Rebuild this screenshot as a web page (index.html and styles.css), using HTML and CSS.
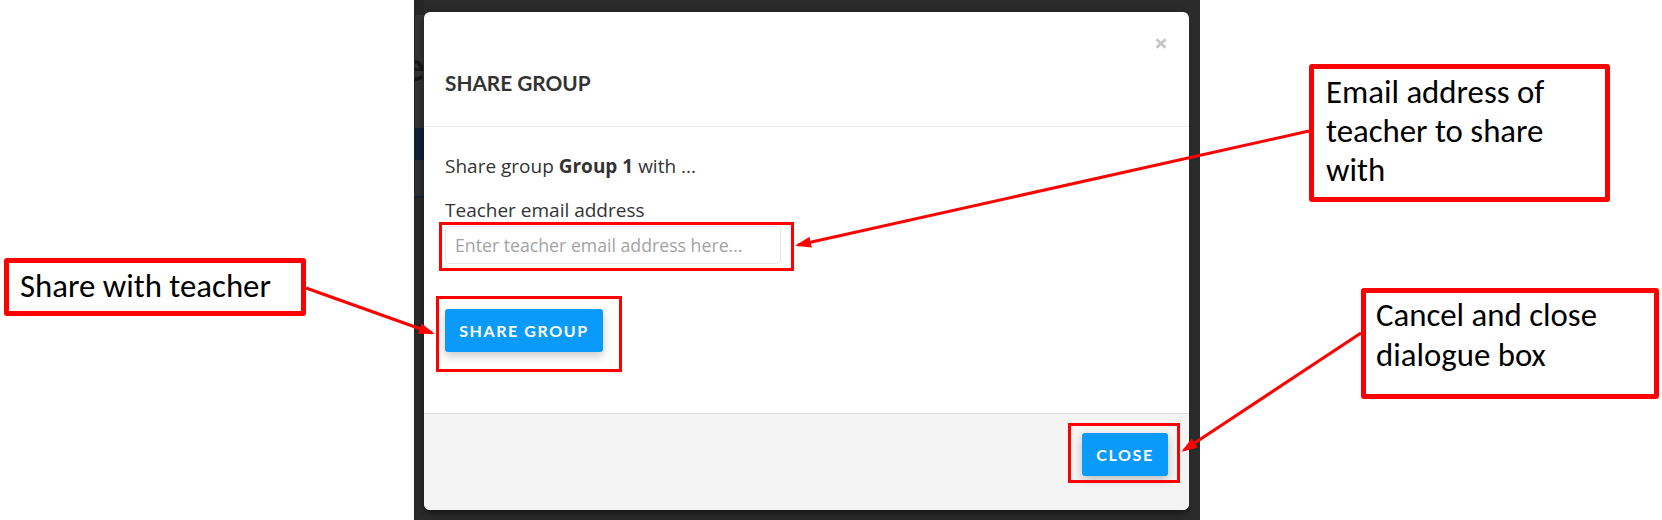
FILE: index.html
```html
<!DOCTYPE html>
<html lang="en">
<head>
<meta charset="utf-8">
<title>Share group</title>
<link rel="stylesheet" href="styles.css">
</head>
<body>
<div class="canvas">
  <div class="stage">
    <div class="backstrip"><span class="back-letter">e</span></div>
    <div class="modal">
      <div class="modal-header">
        <div class="close-row">
          <button class="close-x" aria-label="Close">
            <svg width="12" height="11" viewBox="0 0 12 11"><path d="M1.5 1.2 L10.5 9.8 M10.5 1.2 L1.5 9.8" stroke="#c6c6c6" stroke-width="2.8" fill="none"/></svg>
          </button>
        </div>
        <h4 class="modal-title">SHARE GROUP</h4>
      </div>
      <div class="modal-body">
        <p class="intro">Share group <strong>Group 1</strong> with ...</p>
        <label class="field-label" for="email">Teacher email address</label>
        <input class="field-input" id="email" type="text" placeholder="Enter teacher email address here...">
        <button class="btn btn-share">SHARE GROUP</button>
      </div>
      <div class="modal-footer">
        <button class="btn btn-close">CLOSE</button>
      </div>
    </div>
    <div class="sidestrip"></div>
  </div>

  <div class="hl hl-input"></div>
  <div class="hl hl-share"></div>
  <div class="hl hl-close"></div>

  <div class="note note-share">Share with teacher</div>
  <div class="note note-email">Email address of<br>teacher to share<br>with</div>
  <div class="note note-cancel">Cancel and close<br>dialogue box</div>

  <svg class="arrows" width="1662" height="520" viewBox="0 0 1662 520">
    <defs>
      <marker id="head" viewBox="0 0 16 11" refX="13" refY="5.5" markerWidth="16" markerHeight="11" markerUnits="userSpaceOnUse" orient="auto">
        <path d="M0 0 L16 5.5 L0 11 Z" fill="#ff0000"/>
      </marker>
    </defs>
    <line x1="1309" y1="131" x2="798" y2="245" stroke="#ff0000" stroke-width="3" marker-end="url(#head)"/>
    <line x1="306" y1="288" x2="432" y2="333" stroke="#ff0000" stroke-width="3" marker-end="url(#head)"/>
    <line x1="1361" y1="333" x2="1184" y2="450" stroke="#ff0000" stroke-width="3" marker-end="url(#head)"/>
  </svg>
</div>
</body>
</html>
```

FILE: styles.css
```css
* { box-sizing: border-box; }

html, body {
  margin: 0;
  padding: 0;
  background: #ffffff;
}

.canvas {
  position: relative;
  width: 1662px;
  height: 520px;
  overflow: hidden;
  background: #ffffff;
}

.stage {
  display: flex;
  align-items: flex-start;
  margin-left: 414px;
  width: 786px;
  height: 520px;
  background: #2b2b2b;
}

.backstrip {
  width: 10px;
  height: 520px;
  overflow: hidden;
  display: flex;
  flex-direction: column;
  background: linear-gradient(to bottom,
    #262626 0, #262626 15px,
    #343434 15px, #343434 128px,
    #0f2237 128px, #0f2237 160px,
    #2e3135 160px, #2e3135 196px,
    #10243a 196px, #10243a 198px,
    #2b2b2b 198px);
  border-left: 1px solid #222;
}

.back-letter {
  margin-top: 46px;
  margin-left: -12px;
  font-family: "Lato", sans-serif;
  font-weight: 700;
  font-size: 40px;
  line-height: 40px;
  color: #171717;
}

.sidestrip {
  width: 11px;
  height: 520px;
  background: #2a2a2a;
}

.modal {
  margin-top: 12px;
  width: 765px;
  height: 498px;
  background: #ffffff;
  border-radius: 6px;
  overflow: hidden;
  display: flex;
  flex-direction: column;
  box-shadow: 0 3px 9px rgba(0, 0, 0, 0.5);
}

.modal-header {
  padding: 26px 22px 30px 21px;
  border-bottom: 1px solid #e8e8e8;
  display: flex;
  flex-direction: column;
}

.close-row {
  display: flex;
  justify-content: flex-end;
  height: 11px;
}

.close-x {
  border: 0;
  padding: 0;
  margin: 0;
  background: transparent;
  width: 12px;
  height: 11px;
  display: block;
}

.close-x svg { display: block; }

.modal-title {
  margin: 21px 0 0;
  font-family: "Lato", sans-serif;
  font-weight: 700;
  font-size: 20.8px;
  line-height: 26px;
  color: #333333;
}

.modal-body {
  flex: 1;
  padding: 26px 21px 0;
  font-family: "Open Sans", sans-serif;
  font-size: 19px;
  color: #333333;
  display: flex;
  flex-direction: column;
  align-items: flex-start;
}

.intro {
  margin: 0 0 18px;
  line-height: 26px;
}

.intro strong { font-weight: 700; }

.field-label {
  display: block;
  line-height: 26px;
  margin-bottom: 3px;
}

.field-input {
  display: block;
  width: 336px;
  height: 38px;
  border: 1px solid #e4e4e4;
  border-radius: 4px;
  padding: 0 9px;
  font-family: "Open Sans", sans-serif;
  font-size: 17.7px;
  color: #333;
  background: #fff;
  outline: none;
}

.field-input::placeholder { color: #a3a3a3; }

.btn {
  border: 0;
  border-radius: 3px;
  background: #0a9bfa;
  color: #ffffff;
  font-family: "Lato", sans-serif;
  font-weight: 700;
  font-size: 16px;
  letter-spacing: 1.6px;
  height: 43px;
  padding: 0;
  box-shadow: 0 4px 10px rgba(0, 0, 0, 0.22);
  display: flex;
  align-items: center;
  justify-content: center;
}

.btn-share {
  margin-top: 45px;
  width: 158px;
}

.btn-close {
  width: 86px;
}

.modal-footer {
  height: 97px;
  border-top: 1px solid #dadada;
  background: #f4f4f4;
  padding: 19px 21px 0 0;
  display: flex;
  justify-content: flex-end;
  align-items: flex-start;
}

/* annotation overlays */
.hl {
  position: absolute;
  border: 3px solid #ff0000;
}

.hl-input { left: 439px; top: 222px; width: 355px; height: 49px; }
.hl-share { left: 436px; top: 296px; width: 186px; height: 76px; }
.hl-close { left: 1068px; top: 423px; width: 112px; height: 60px; }

.note {
  position: absolute;
  border: 5px solid #ff0000;
  border-radius: 3px;
  background: #ffffff;
  font-family: "Carlito", "Lato", sans-serif;
  font-size: 32.8px;
  color: #000000;
}

.note-share {
  left: 4px; top: 258px; width: 302px; height: 58px;
  padding: 4px 0 0 11px;
  line-height: 39px;
}

.note-email {
  left: 1309px; top: 64px; width: 301px; height: 138px;
  padding: 4px 0 0 12px;
  line-height: 39.2px;
}

.note-cancel {
  left: 1361px; top: 288px; width: 298px; height: 111px;
  padding: 3px 0 0 10px;
  line-height: 39.5px;
}

.arrows {
  position: absolute;
  left: 0;
  top: 0;
  pointer-events: none;
}
```
